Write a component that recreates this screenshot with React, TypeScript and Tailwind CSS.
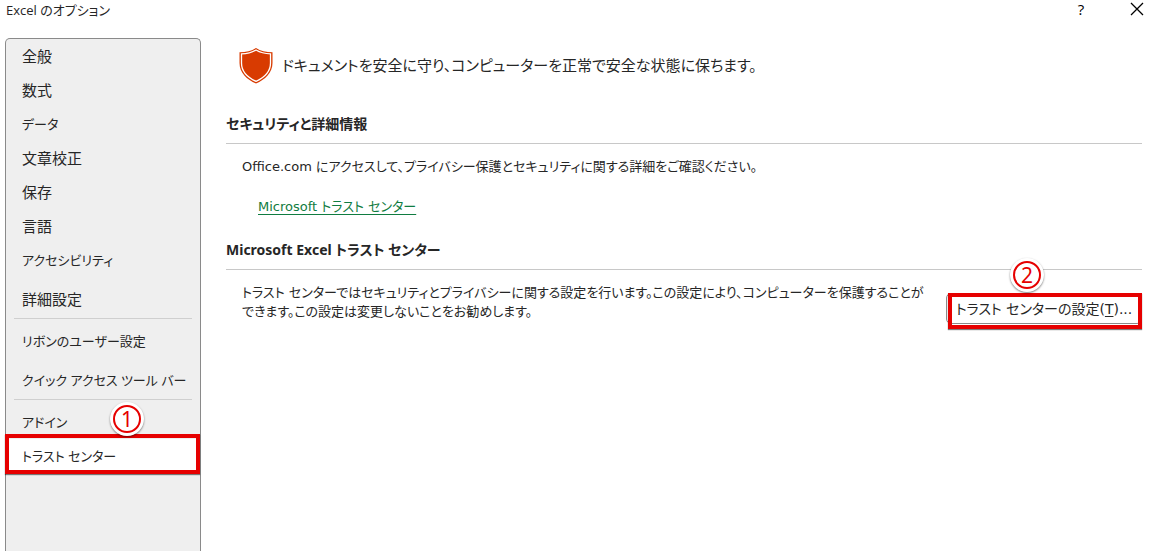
import { Fragment, useState } from 'react'
import type { ReactNode } from 'react'

type NavGroup = { id: string; labels: string[]; className: string }

const navGroups: NavGroup[] = [
  {
    id: 'basic',
    labels: ['全般', '数式', 'データ', '文章校正', '保存', '言語', 'アクセシビリティ'],
    className: '',
  },
  { id: 'advanced', labels: ['詳細設定'], className: 'mt-[5px]' },
  {
    id: 'customize',
    labels: ['リボンのユーザー設定', 'クイック アクセス ツール バー'],
    className: 'flex flex-col gap-[5px]',
  },
  { id: 'addins', labels: ['アドイン', 'トラスト センター'], className: '' },
]

// a divider is drawn before these groups
const dividedGroups = ['customize', 'addins']

// kana labels are set smaller than the kanji ones
const hasKana = (text: string) => /[\u3040-\u30ff]/.test(text)

function StepBadge({ n, className }: { n: number; className: string }) {
  return (
    <span
      className={`absolute z-10 flex size-[34px] items-center justify-center rounded-full bg-white shadow-[0_1px_2px_rgba(0,0,0,0.5)] ${className}`}
    >
      <span className="flex size-7 items-center justify-center rounded-full border-2 border-[#e60000] font-['Noto_Sans',sans-serif] text-[21px] leading-none text-[#e60000]">
        {n}
      </span>
    </span>
  )
}

function Shield() {
  return (
    <svg width="34" height="37" viewBox="0 0 34 37" aria-hidden="true" className="shrink-0">
      <path
        d="M17 1C12.500 4 7 5.200 0.500 5.200V16C0.500 26 8 32.500 17 36.500C26 32.500 33.500 26 33.500 16V5.200C27 5.200 21.500 4 17 1Z"
        fill="#d83b01"
      />
      <path
        d="M17 3C12.500 5.700 8 6.700 2.500 6.900V16C2.500 24.700 9 30.700 17 34.300C25 30.700 31.500 24.700 31.500 16V6.900C26 6.700 21.500 5.700 17 3Z"
        fill="none"
        stroke="#fff"
        strokeWidth="1.300"
      />
    </svg>
  )
}

function Section({ title, children }: { title: string; children: ReactNode }) {
  return (
    <section>
      <h2 className="border-b border-[#c8c8c8] pt-px pb-[7px] font-['Noto_Sans','Noto_Sans_CJK_JP',sans-serif] text-sm leading-6 font-bold">
        {title}
      </h2>
      {children}
    </section>
  )
}

export default function App() {
  const [selected, setSelected] = useState('トラスト センター')

  return (
    <div className="flex h-screen flex-col overflow-hidden bg-white font-['DejaVu_Sans','Noto_Sans_CJK_JP',sans-serif] text-[13px] text-[#262626] [font-feature-settings:'palt']">
      {/* Title bar */}
      <header className="flex h-[38px] shrink-0 items-start justify-between pr-[15px] pl-[6px]">
        <h1 className="font-['Open_Sans','Noto_Sans_CJK_JP',sans-serif] text-[13px] leading-5">
          Excel のオプション
        </h1>
        <div className="flex items-center gap-[43px] text-black">
          <button
            type="button"
            aria-label="ヘルプ"
            className="w-3 font-['Open_Sans',sans-serif] text-[15px] leading-4"
          >
            ?
          </button>
          <button type="button" aria-label="閉じる" className="flex h-[18px] items-center">
            <svg width="14" height="14" viewBox="0 0 14 14" stroke="currentColor" strokeWidth="1.300">
              <path d="M1 1L13 13M13 1L1 13" />
            </svg>
          </button>
        </div>
      </header>

      <div className="flex min-h-0 flex-1 pr-[17px] pl-[5px]">
        {/* Sidebar */}
        <nav className="w-[196px] shrink-0 rounded-t-[5px] border border-b-0 border-[#8a8a8a] bg-[#efefef] font-['Noto_Sans','Noto_Sans_CJK_JP',sans-serif]">
          {navGroups.map((group) => (
            <Fragment key={group.id}>
              {dividedGroups.includes(group.id) && (
                <hr className="mx-2 mt-[2px] mb-[5px] border-[#cfcfcf]" />
              )}
              <div className={group.className}>
                {group.labels.map((label) => (
                  <div key={label} className="relative">
                    <button
                      type="button"
                      onClick={() => setSelected(label)}
                      className={`block h-[34px] w-full pl-4 text-left leading-[34px] whitespace-nowrap ${
                        hasKana(label) ? 'text-[13px]' : 'text-[15px]'
                      } ${selected === label ? 'bg-white' : ''}`}
                    >
                      {label}
                    </button>
                    {label === 'トラスト センター' && (
                      <>
                        <span className="pointer-events-none absolute -top-[5px] right-0 -bottom-px -left-px border-4 border-[#e60000] shadow-[0_1px_1px_rgba(0,0,0,0.5)]" />
                        <StepBadge n={1} className="-top-[37px] left-[104px]" />
                      </>
                    )}
                  </div>
                ))}
              </div>
            </Fragment>
          ))}
        </nav>

        {/* Content */}
        <main className="ml-[25px] min-w-0 flex-1 pt-[9px]">
          <div className="mb-[27px] flex items-center gap-[9px] pl-[13px]">
            <Shield />
            <p className="text-[15px] leading-6">
              ドキュメントを安全に守り、コンピューターを正常で安全な状態に保ちます。
            </p>
          </div>

          <Section title="セキュリティと詳細情報">
            <p className="mt-[11px] pl-4 leading-6">
              Office.com にアクセスして、プライバシー保護とセキュリティに関する詳細をご確認ください。
            </p>
            <p className="mt-4 mb-[18px] pl-8 leading-6">
              <a href="#trust" className="text-[#107c41] underline underline-offset-3">
                Microsoft トラスト センター
              </a>
            </p>
          </Section>

          <Section title="Microsoft Excel トラスト センター">
            <div className="flex items-start justify-between pt-[13px] pl-4">
              <p className="w-[690px] leading-[19px]">
                トラスト センターではセキュリティとプライバシーに関する設定を行います。この設定により、コンピューターを保護することができます。この設定は変更しないことをお勧めします。
              </p>
              <div className="relative mt-[10px] h-[36px] shrink-0">
                <button
                  type="button"
                  className="block h-[31px] w-[196px] rounded-[5px] border border-[#8a8a8a] bg-white text-sm leading-[30px] whitespace-nowrap"
                >
                  トラスト センターの設定(<span className="underline underline-offset-2">T</span>)...
                </button>
                <span className="pointer-events-none absolute inset-y-0 right-0 left-[2px] border-4 border-[#e60000] shadow-[0_1px_1px_rgba(0,0,0,0.5)]" />
                <StepBadge n={2} className="-top-[35px] left-[64px]" />
              </div>
            </div>
          </Section>
        </main>
      </div>
    </div>
  )
}
